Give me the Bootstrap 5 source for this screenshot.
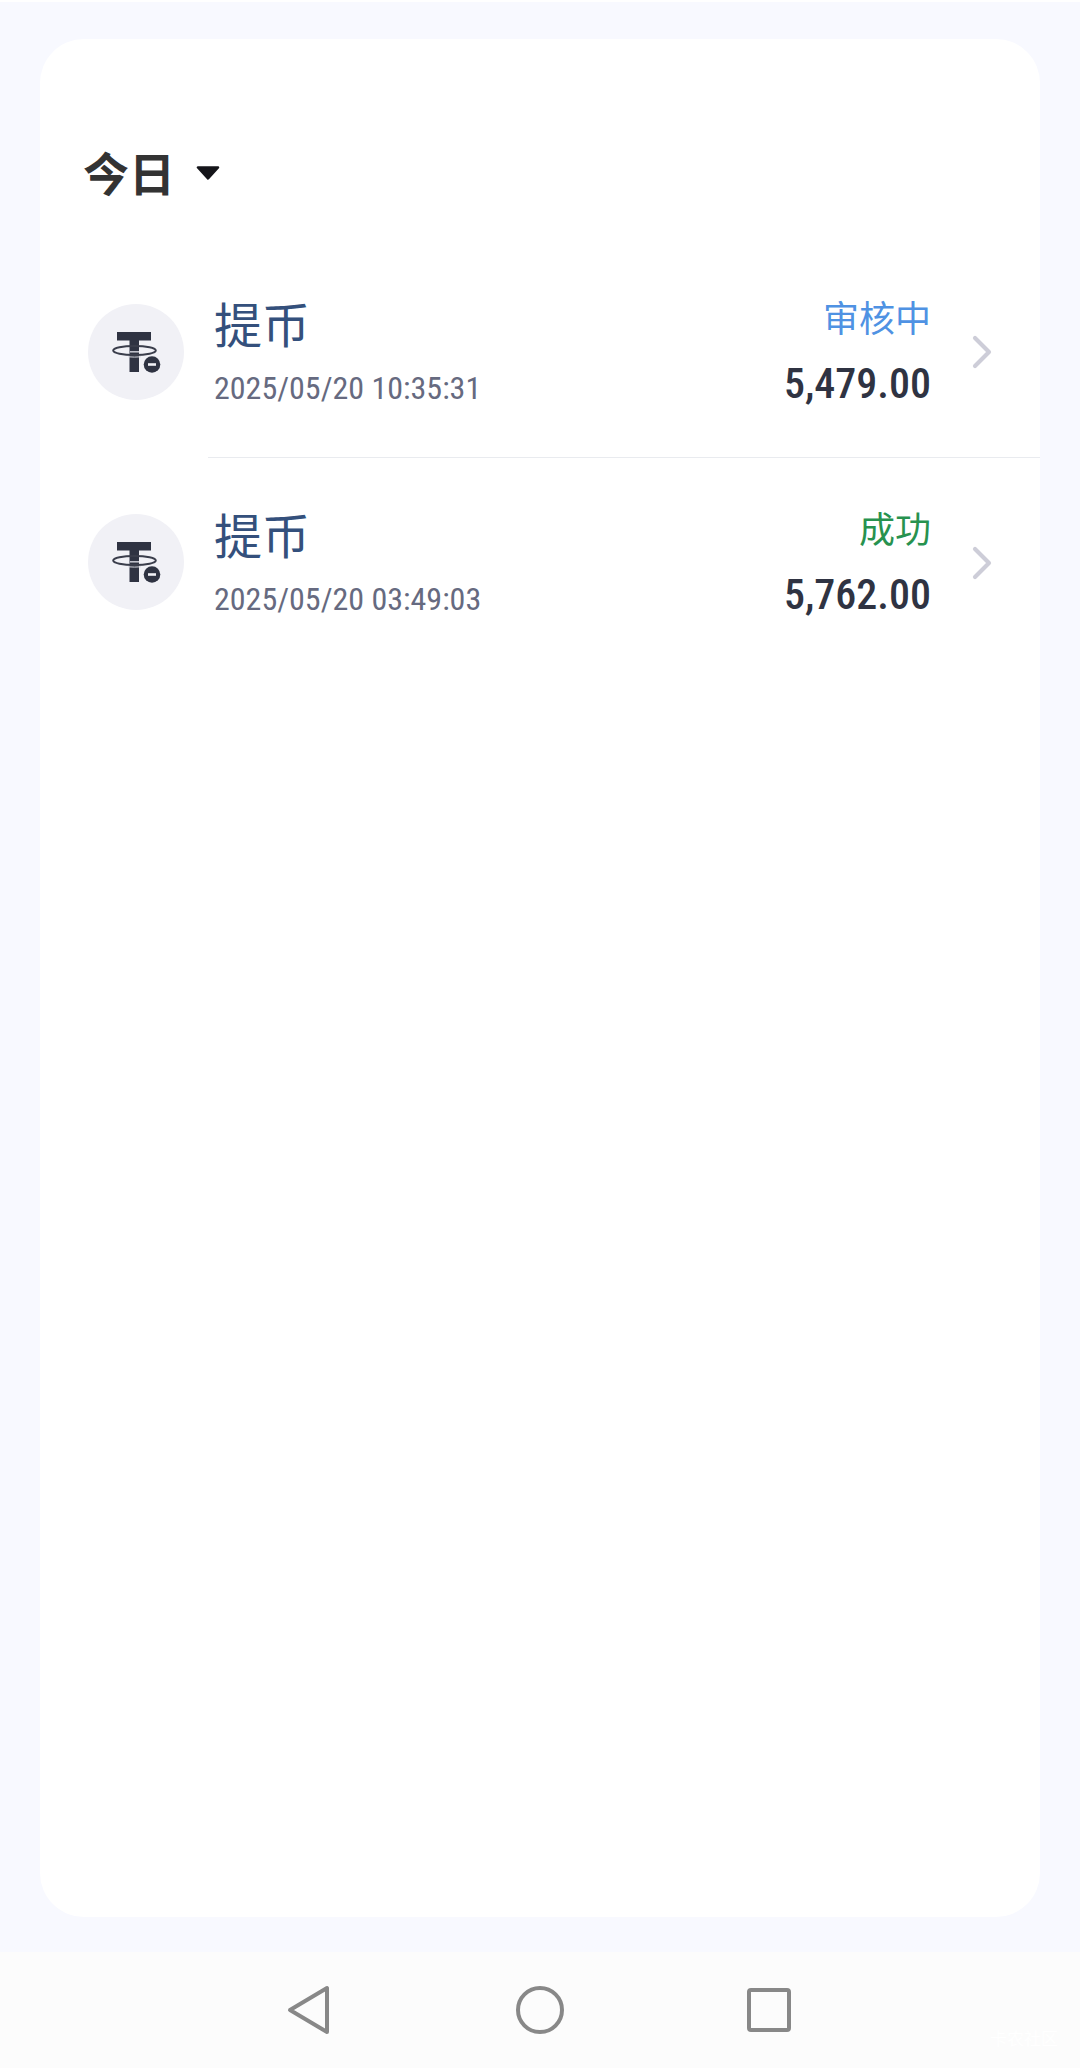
<!DOCTYPE html>
<html lang="zh-CN">
<head>
<meta charset="utf-8">
<meta name="viewport" content="width=device-width, initial-scale=1">
<title>提币记录</title>
<link href="https://cdn.jsdelivr.net/npm/bootstrap@5.3.0/dist/css/bootstrap.min.css" rel="stylesheet">
<style>
  body { background: #f8f9ff; border-top: 2px solid #fff; font-family: "Noto Sans CJK SC", sans-serif; }
  .panel { margin: 37px 40px 35px; padding-top: 98px; border-radius: 44px; background: #fff; }
  .day-filter { margin: 0 43px 42px; gap: 20px; font-size: 46px; line-height: 68px; color: #333; }
  .record { height: 210px; padding-left: 48px; color: #2f3342; }
  .coin { width: 96px; height: 96px; }
  .record-body { margin-left: 24px; padding: 0 48px 0 6px; }
  .record + .record .record-body { border-top: 1px solid #e9ebef; }
  .record-name { font-size: 48px; line-height: 72px; color: #34507c; }
  .record-time { font-family: "Roboto Condensed", Roboto, sans-serif; font-size: 32px; line-height: 60px; color: #666a80; }
  .record-state { font-size: 36px; line-height: 64px; }
  .state-pending { color: #4f92e3; }
  .state-done { color: #27924f; }
  .record-sum { font-family: "Roboto Condensed", Roboto, sans-serif; font-size: 42px; line-height: 72px; font-weight: 500; }
  .chevron { width: 20px; height: 34px; margin-left: 41px; }
  .sysbar { height: 116px; gap: 180px; background: #fcfcfc; }
  .sysbar svg { width: 50px; height: 50px; }
  .site-tag { right: 22px; bottom: 18px; font-size: 17px; line-height: 24px; color: #fff; }
</style>
</head>
<body class="d-flex flex-column min-vh-100">
<svg class="d-none" aria-hidden="true">
  <symbol id="coin" viewBox="0 0 96 96">
    <circle cx="48" cy="48" r="48" fill="#f1f1f6"/>
    <path d="M29 28h34v8.500H51V68h-9.500V36.500H29z" fill="#2f3342"/>
    <path d="M42 47.800h9" stroke="#c9cad3" stroke-width="1.500"/>
    <ellipse cx="46.500" cy="46.500" rx="21.300" ry="4.500" fill="none" stroke="#3a3d4b" stroke-width="2"/>
    <path d="M40 52.800q6.500 .6 13 0" fill="none" stroke="#d5d6dd" stroke-width="1"/>
    <circle cx="64" cy="60.500" r="8.300" fill="#2f3342"/>
    <path d="M60 60.500h8" stroke="#f1f1f6" stroke-width="2.600"/>
  </symbol>
  <symbol id="chevron" viewBox="0 0 20 34">
    <path d="M3 3l14 14L3 31" fill="none" stroke="#cdcdd8" stroke-width="4.200" stroke-linecap="round" stroke-linejoin="round"/>
  </symbol>
</svg>

<main class="panel flex-grow-1">
  <button type="button" class="day-filter btn p-0 border-0 d-flex align-items-center fw-bold">
    今日
    <svg width="26" height="18" viewBox="0 -4 26 18" aria-hidden="true"><path d="M3 1.500h20L13 12.500z" fill="#15151a" stroke="#15151a" stroke-width="2.500" stroke-linejoin="round"/></svg>
  </button>

  <div>
    <a href="#" class="record d-flex align-items-center text-decoration-none">
      <svg class="coin flex-shrink-0" aria-hidden="true"><use href="#coin"/></svg>
      <div class="record-body d-flex flex-grow-1 align-items-center h-100">
        <div class="flex-grow-1">
          <div class="record-name">提币</div>
          <div class="record-time">2025/05/20 10:35:31</div>
        </div>
        <div class="text-end">
          <div class="record-state state-pending">审核中</div>
          <div class="record-sum">5,479.00</div>
        </div>
        <svg class="chevron flex-shrink-0" aria-hidden="true"><use href="#chevron"/></svg>
      </div>
    </a>
    <a href="#" class="record d-flex align-items-center text-decoration-none">
      <svg class="coin flex-shrink-0" aria-hidden="true"><use href="#coin"/></svg>
      <div class="record-body d-flex flex-grow-1 align-items-center h-100">
        <div class="flex-grow-1">
          <div class="record-name">提币</div>
          <div class="record-time">2025/05/20 03:49:03</div>
        </div>
        <div class="text-end">
          <div class="record-state state-done">成功</div>
          <div class="record-sum">5,762.00</div>
        </div>
        <svg class="chevron flex-shrink-0" aria-hidden="true"><use href="#chevron"/></svg>
      </div>
    </a>
  </div>
</main>

<nav class="sysbar position-relative d-flex justify-content-center align-items-center" aria-label="系统导航">
  <button type="button" class="btn p-0 border-0 d-flex" aria-label="返回">
    <svg viewBox="0 0 50 50" fill="none" stroke="#888" stroke-width="4" stroke-linejoin="round"><path d="M5 25L42 3v44z"/></svg>
  </button>
  <button type="button" class="btn p-0 border-0 d-flex" aria-label="主页">
    <svg viewBox="0 0 50 50" fill="none" stroke="#888" stroke-width="4"><circle cx="25" cy="25" r="22"/></svg>
  </button>
  <button type="button" class="btn p-0 border-0 d-flex" aria-label="最近任务">
    <svg viewBox="0 0 50 50" fill="none" stroke="#888" stroke-width="4"><rect x="4" y="5" width="40" height="40" rx="2"/></svg>
  </button>
  <span class="site-tag position-absolute">卡农社区</span>
</nav>
<script src="https://cdn.jsdelivr.net/npm/bootstrap@5.3.0/dist/js/bootstrap.bundle.min.js"></script>
</body>
</html>
